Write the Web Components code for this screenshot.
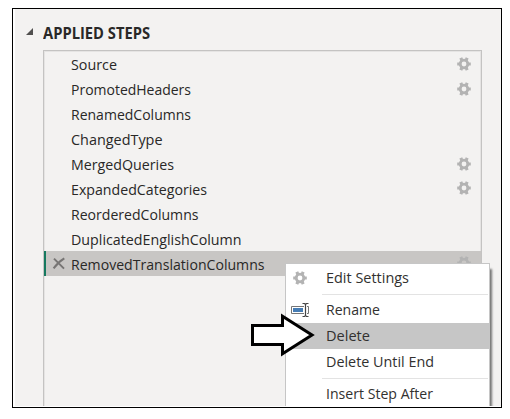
<!DOCTYPE html>
<html lang="en">
<head>
<meta charset="utf-8">
<title>Applied Steps</title>
<style>
body { margin: 0; background: #fff; font: 15.2px/25px "Open Sans", "Noto Sans", sans-serif; color: #292827; overflow: hidden; }
</style>
</head>
<body>
<steps-window></steps-window>
<script>
class FitText extends HTMLElement {
  connectedCallback() {
    const root = this.attachShadow({ mode: 'open' });
    root.innerHTML = `<style>
      :host { display: block; width: var(--w); white-space: nowrap; }
      span { display: inline-block; transform-origin: 0 50%; }
    </style><span><slot></slot></span>`;
    const span = root.querySelector('span');
    const target = +this.getAttribute('width');
    this.style.setProperty('--w', target + 'px');
    span.style.transform = `scaleX(${target / span.getBoundingClientRect().width})`;
  }
}
customElements.define('fit-text', FitText);

class GearIcon extends HTMLElement {
  connectedCallback() {
    this.attachShadow({ mode: 'open' }).innerHTML = `<style>
      :host { display: block; width: 14px; height: 14px; }
      svg { display: block; }
    </style>
    <svg width="14" height="14" viewBox="-7 -7 14 14">
      <g stroke="#b3b3b3" stroke-width="3.1" fill="none">
        <path d="M-6.8 0H-3.6M3.6 0H6.8M-3.2 -6.2L-2 -3.4M3.2 -6.2L2 -3.4M-3.2 6.2L-2 3.4M3.2 6.2L2 3.4"/>
        <circle r="3.8" stroke-width="2.8"/>
      </g>
    </svg>`;
  }
}
customElements.define('gear-icon', GearIcon);

class StepRow extends HTMLElement {
  connectedCallback() {
    const selected = this.hasAttribute('selected');
    const gear = this.hasAttribute('gear');
    this.attachShadow({ mode: 'open' }).innerHTML = `<style>
      :host { display: flex; height: 25px; box-sizing: border-box; align-items: center; padding-right: 10px; }
      :host([selected]) { background: #c8c6c4; box-shadow: inset 2px 0 #15795f; }
      .mark { width: 27px; height: 25px; flex: none; }
      .mark svg { display: block; }
      fit-text { padding-top: 1px; }
      gear-icon { margin-left: auto; }
      :host([lift]) gear-icon { margin-bottom: 2px; }
      :host([selected]) gear-icon { margin-bottom: 1px; }
    </style>
    <div class="mark">${selected ? `<svg width="27" height="25"><path d="M10 7.6L20 17.6M20.3 7.3Q14 11 9.6 17.4" fill="none" stroke="#777574" stroke-width="2"/></svg>` : ''}</div>
    <fit-text width="${this.getAttribute('width')}">${this.getAttribute('name')}</fit-text>
    ${gear ? '<gear-icon></gear-icon>' : ''}`;
  }
}
customElements.define('step-row', StepRow);

class MenuItem extends HTMLElement {
  connectedCallback() {
    this.attachShadow({ mode: 'open' }).innerHTML = `<style>
      :host { display: flex; height: 26px; align-items: center; line-height: 26px; flex: none; }
      :host([active]) { background: #c6c6c6; }
      .icon { width: 40px; flex: none; display: flex; }
      fit-text { padding-bottom: 3px; }
    </style>
    <div class="icon"><slot name="icon"></slot></div>
    <fit-text width="${this.getAttribute('width')}">${this.getAttribute('label')}</fit-text>`;
  }
}
customElements.define('menu-item', MenuItem);

class StepMenu extends HTMLElement {
  connectedCallback() {
    this.attachShadow({ mode: 'open' }).innerHTML = `<style>
      :host { display: flex; flex-direction: column; box-sizing: border-box; width: 205px; height: 160px;
        background: #fff; border: 1px solid #c6c6c6; padding-top: 1px;
        box-shadow: 3px 5px 2px -1px #777; color: #323130; }
      hr { width: 166px; height: 1px; border: 0; background: #e3e3e3; margin: 3px 0 2px 36px; flex: none; }
      gear-icon { margin-left: 7px; }
      .rename { margin: -1px 0 0 5px; display: block; }
    </style>
    <menu-item label="Edit Settings" width="83"><gear-icon slot="icon"></gear-icon></menu-item>
    <hr>
    <menu-item label="Rename" width="54">
      <svg slot="icon" class="rename" width="19" height="16" viewBox="0 0 19 16">
        <path d="M13 4.5H.5V11.5H13M16 4.5H17.5V11.5H16" fill="none" stroke="#757575"/>
        <path d="M2 6H12V10H2Z" fill="#467db5"/>
        <path d="M11.5 1.5H13.5L14.5 2.5L15.5 1.5H17.5M14.5 2.5V13.5M11.5 14.5H13.5L14.5 13.5L15.5 14.5H17.5" fill="none" stroke="#444" stroke-width="1.2"/>
      </svg>
    </menu-item>
    <menu-item active label="Delete" width="44"></menu-item>
    <menu-item label="Delete Until End" width="108"></menu-item>
    <hr>
    <menu-item label="Insert Step After" width="107"></menu-item>`;
  }
}
customElements.define('step-menu', StepMenu);

class StepsWindow extends HTMLElement {
  connectedCallback() {
    this.attachShadow({ mode: 'open' }).innerHTML = `<style>
      :host { display: block; position: relative; box-sizing: border-box; width: 490px; height: 400px;
        margin: 8px 0 0 12px; border: 1px solid #000; padding: 0 0 1px 2px; }
      .panel { position: relative; height: 397px; overflow: hidden; background: #f3f2f1; }
      header { display: flex; height: 41px; box-sizing: border-box; padding: 8px 0 0 11px; font-weight: 700; }
      header svg { width: 17px; height: 25px; flex: none; }
      header fit-text { padding-top: 4px; }
      .list { box-sizing: border-box; width: 439px; height: 370px; margin-left: 28px; border: 1px solid #c4c3c2;
        box-shadow: inset 1px 1px #e5e4e3, inset -1px 0 #e5e4e3; }
      step-menu { position: absolute; left: 270px; top: 254px; }
      .arrow { position: absolute; left: 235px; top: 302px; }
    </style>
    <div class="panel">
      <header><svg><path d="M0 18L7 11V18Z" fill="#504f4e"/></svg><fit-text width="107">APPLIED STEPS</fit-text></header>
      <div class="list">
        <step-row name="Source" width="46" gear></step-row>
        <step-row name="PromotedHeaders" width="120" gear></step-row>
        <step-row name="RenamedColumns" width="120"></step-row>
        <step-row name="ChangedType" width="91.5"></step-row>
        <step-row name="MergedQueries" width="103" gear></step-row>
        <step-row name="ExpandedCategories" width="136" gear lift></step-row>
        <step-row name="ReorderedColumns" width="127.5"></step-row>
        <step-row name="DuplicatedEnglishColumn" width="170.5"></step-row>
        <step-row name="RemovedTranslationColumns" width="193.5" gear selected></step-row>
      </div>
      <step-menu></step-menu>
      <svg class="arrow" width="66" height="48" viewBox="250 311 66 48">
        <path d="M252.5 325.5H282.5V316.3L312 335L282.5 353.7V344.5H252.5Z" fill="#fff" stroke="#000" stroke-width="3"/>
      </svg>
    </div>`;
  }
}
customElements.define('steps-window', StepsWindow);
</script>
</body>
</html>
